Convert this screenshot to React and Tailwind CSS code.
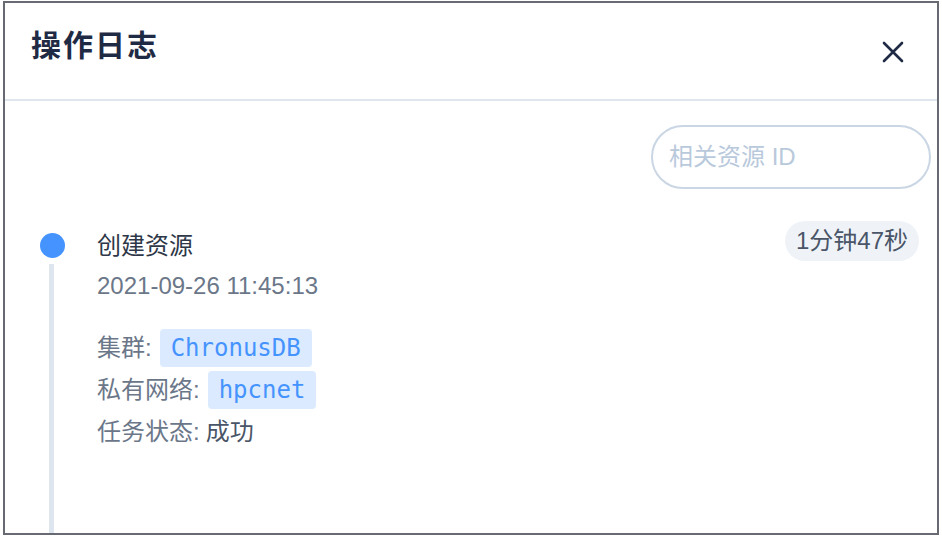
import React from "react";

const details = [
  { label: "集群:", tag: "ChronusDB" },
  { label: "私有网络:", tag: "hpcnet" },
  { label: "任务状态:", text: "成功" },
];

export default function App() {
  return (
    <div className="w-[942px] h-[540px] bg-white pt-[1px] pl-[3px] overflow-hidden" style={{ fontFamily: '"Liberation Sans", "Noto Sans CJK SC", sans-serif' }}>
      <div className="w-[936px] h-[534px] border-2 border-[#676a72] overflow-hidden flex flex-col">
        {/* Header */}
        <div className="h-[98px] shrink-0 flex items-center justify-between pl-[26px] pr-[32px] border-b-2 border-[#dfe6ee]">
          <h1 className="text-[30px] font-semibold text-[#1f2a44] tracking-[2px] -mt-[12px]">操作日志</h1>
          <svg width="24" height="24" viewBox="0 0 24 24" className="mt-[2px]" fill="none" stroke="#1f2a44" strokeWidth="2.6" strokeLinecap="round">
            <path d="M3 3 L21 21 M21 3 L3 21" />
          </svg>
        </div>

        {/* Body */}
        <div className="flex-1 flex flex-col">
          <div className="flex justify-end pt-[24px] pr-[6px]">
            <div className="w-[280px] h-[64px] rounded-full border-2 border-[#cad6e4] flex items-center pl-[16px]">
              <span className="text-[24px] text-[#b9c9dc]">相关资源 ID</span>
            </div>
          </div>

          <div className="flex flex-1 pl-[34px] pr-[18px] mt-[32px]">
            {/* Timeline rail */}
            <div className="w-[26px] flex flex-col items-center shrink-0">
              <div className="w-[25px] h-[25px] rounded-full bg-[#4593ff] mt-[12px]" />
              <div className="w-[5px] flex-1 bg-[#dde5ee] mt-[6px] -ml-[1px]" />
            </div>

            {/* Entry */}
            <div className="flex-1 pl-[32px]">
              <div className="flex items-start justify-between">
                <div className="pt-[8px]">
                  <div className="text-[24px] leading-[34px] text-[#2d3748]">创建资源</div>
                  <div className="text-[24px] leading-[34px] text-[#6b7789] mt-[6px]">2021-09-26 11:45:13</div>
                </div>
                <div className="h-[40px] px-[11px] rounded-full bg-[#eff3f8] flex items-center text-[24px] text-[#4a5568]">1分钟47秒</div>
              </div>

              <div className="mt-[26px] flex flex-col gap-[4px]">
                {details.map((d) => (
                  <div key={d.label} className="flex items-center h-[38px] text-[24px] text-[#6b7789]">
                    <span>{d.label}</span>
                    {d.tag ? (
                      <span className="ml-[8px] h-[38px] px-[11px] rounded-[4px] bg-[#dbeafe] text-[#4593ff] text-[24px] flex items-center" style={{ fontFamily: '"DejaVu Sans Mono", monospace' }}>
                        {d.tag}
                      </span>
                    ) : (
                      <span className="ml-[6px] text-[#4a5568]">{d.text}</span>
                    )}
                  </div>
                ))}
              </div>
            </div>
          </div>
        </div>
      </div>
    </div>
  );
}
